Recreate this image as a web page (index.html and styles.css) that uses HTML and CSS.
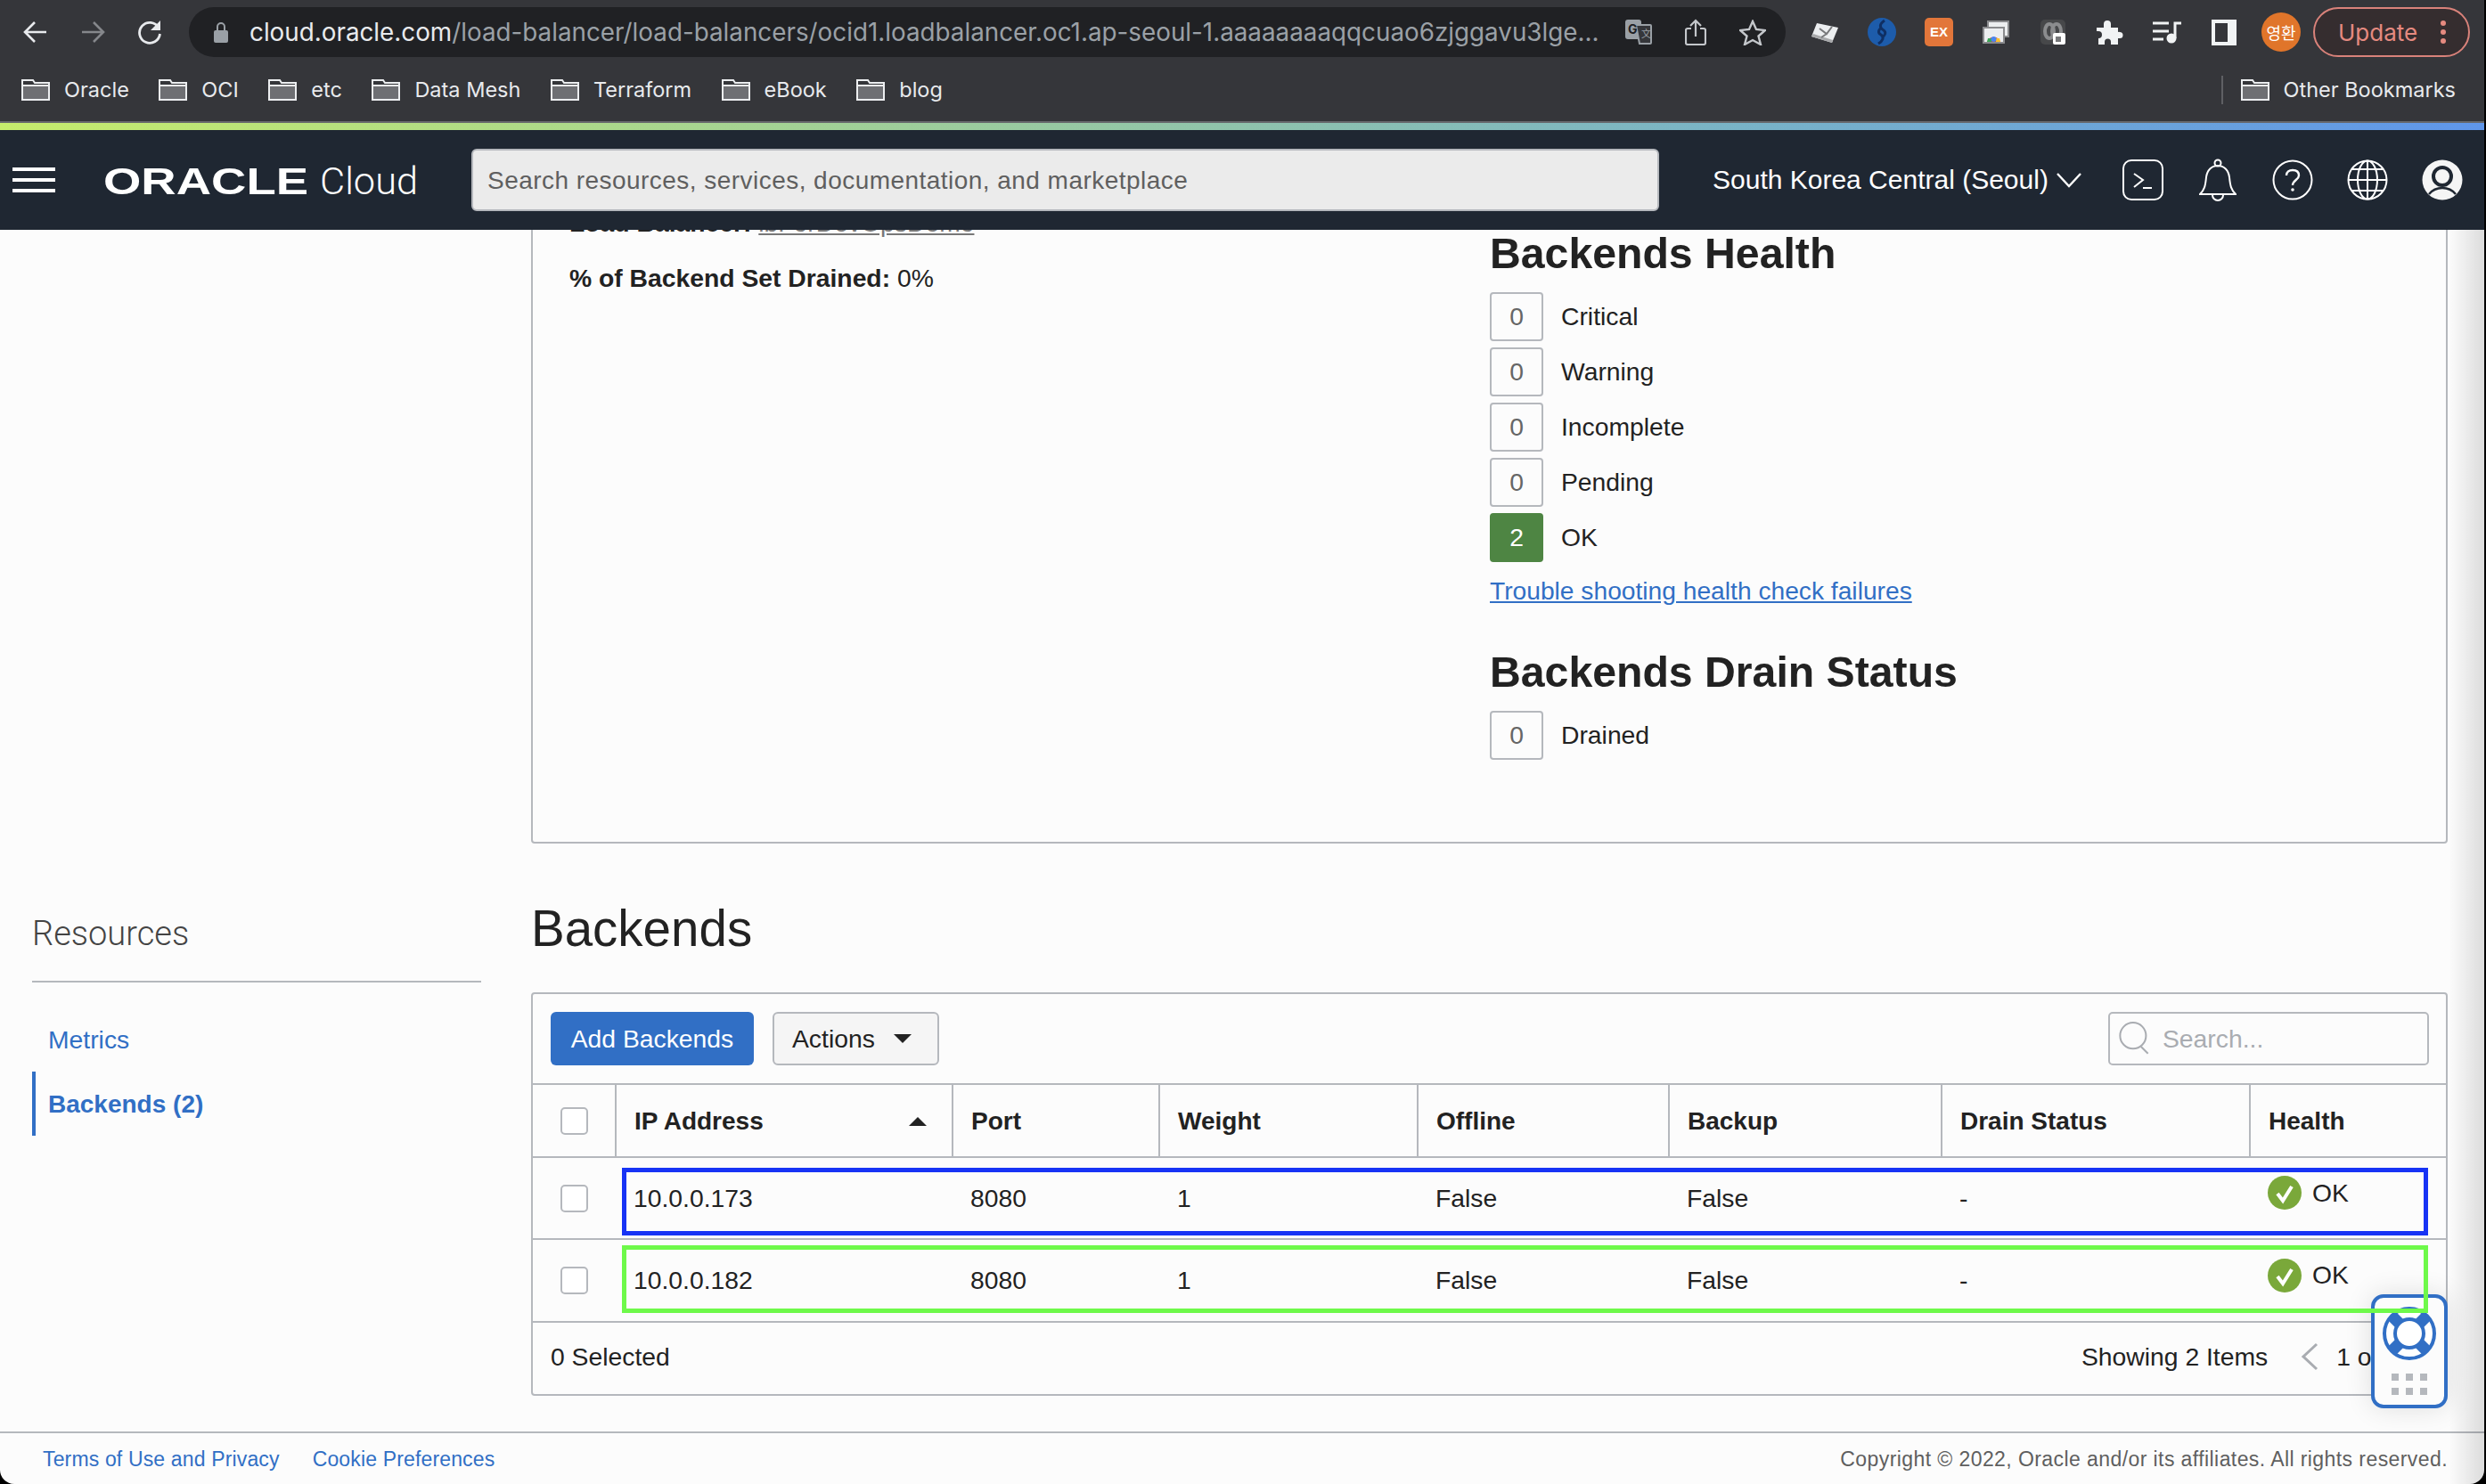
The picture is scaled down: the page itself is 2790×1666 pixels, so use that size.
FILE: index.html
```html
<!DOCTYPE html>
<html lang="en">
<head>
    <meta charset="UTF-8">
    <title>Load Balancer | Oracle Cloud Infrastructure</title>
    <link rel="stylesheet" href="styles.css">
</head>
<body>
<svg class="defs" width="0" height="0">
    <symbol id="folder" viewBox="0 0 32 24">
        <path d="M1 1h12l2 3h16v19H1z" fill="#35363a" stroke="#eceef0" stroke-width="2"/>
        <path d="M2 8h28v14H2z" fill="#6e6f73"/>
        <path d="M1 7h30" stroke="#eceef0" stroke-width="2"/>
    </symbol>
    <symbol id="check" viewBox="0 0 38 38">
        <circle cx="19" cy="19" r="19" fill="#7aa83a"/>
        <path d="M11 20l6 8 10-16" fill="none" stroke="#fff" stroke-width="4"/>
    </symbol>
</svg>
<div class="window">
    <div class="toolbar">
        <div class="nav-btn">
            <svg width="28" height="26" viewBox="0 0 28 26"><path d="M26 13H3M13 2L2 13l11 11" fill="none" stroke="#e8eaed" stroke-width="2.6"/></svg>
        </div>
        <div class="nav-btn">
            <svg width="28" height="26" viewBox="0 0 28 26"><path d="M2 13h23M15 2l11 11-11 11" fill="none" stroke="#85878b" stroke-width="2.6"/></svg>
        </div>
        <div class="nav-btn">
            <svg width="28" height="28" viewBox="0 0 28 28"><path d="M24 9a11.500 11.500 0 1 0 1.500 7" fill="none" stroke="#e8eaed" stroke-width="2.8"/><path d="M26 1v11H15z" fill="#e8eaed"/></svg>
        </div>
        <div class="omnibox">
            <svg class="lock" width="16" height="24" viewBox="0 0 16 24"><path d="M4 11V6a4 4 0 0 1 8 0v5" fill="none" stroke="#9aa0a6" stroke-width="2"/><rect y="10" width="16" height="14" rx="2" fill="#9aa0a6"/></svg>
            <div class="url"><span class="url-host">cloud.oracle.com</span>/load-balancer/load-balancers/ocid1.loadbalancer.oc1.ap-seoul-1.aaaaaaaaqqcuao6zjggavu3lge...</div>
            <div class="omni-icon">
                <svg width="30" height="28" viewBox="0 0 30 28"><rect width="18" height="22" rx="3" fill="#9aa0a6"/><path d="M12 6h16a1 1 0 0 1 1 1v19a1 1 0 0 1-1 1H16z" fill="#35363a" stroke="#9aa0a6" stroke-width="2"/><text x="3" y="16" class="omni-g">G</text><text x="18" y="20" class="omni-x">文</text></svg>
            </div>
            <div class="omni-icon">
                <svg width="24" height="30" viewBox="0 0 24 30"><path d="M7 11H3a2 2 0 0 0-2 2v14a2 2 0 0 0 2 2h18a2 2 0 0 0 2-2V13a2 2 0 0 0-2-2h-4M12 20V2M6 8l6-6 6 6" fill="none" stroke="#c4c7cb" stroke-width="2.2"/></svg>
            </div>
            <div class="omni-icon">
                <svg width="30" height="29" viewBox="0 0 30 29"><path d="M15 2l4 9 10 1-7.500 6.500L24 28l-9-5-9 5 2.500-9.500L1 12l10-1z" fill="none" stroke="#c4c7cb" stroke-width="2.4"/></svg>
            </div>
        </div>
        <div class="extensions">
            <div class="ext">
                <svg width="32" height="26" viewBox="0 0 32 26"><path d="M7 3l24 5-7 17L1 18z" fill="#eceef0"/><path d="M1 18l23 7 1-3L3 15z" fill="#a8a9ab"/><path d="M10 9l8 6 6-8M18 15l-6 4" stroke="#77787a" stroke-width="2" fill="none"/></svg>
            </div>
            <div class="ext">
                <svg width="32" height="32" viewBox="0 0 32 32"><circle cx="16" cy="16" r="16" fill="#1d5cab"/><path d="M19 3c-6 4-6 8-1 11 3 2 2 6-2 8M12 29c5-3 7-7 3-10-4-2-3-6 1-8" fill="none" stroke="#0f2f63" stroke-width="3"/></svg>
            </div>
            <div class="ext">
                <div class="ext-ex">EX</div>
            </div>
            <div class="ext">
                <svg width="30" height="26" viewBox="0 0 30 26"><rect x="6" y="1" width="23" height="17" fill="#eceef0" stroke="#8a8b8e" stroke-width="2"/><rect x="1" y="8" width="23" height="17" fill="#eceef0" stroke="#8a8b8e" stroke-width="2"/><path d="M5 24a8 8 0 0 1 15 0z" fill="#d9453a"/><path d="M5 24h5v-4H6z" fill="#3aa757"/><path d="M15 24h5l-1-4h-4z" fill="#fbc02d"/><circle cx="12.500" cy="21" r="3" fill="#4a85f0"/></svg>
            </div>
            <div class="ext">
                <svg width="28" height="28" viewBox="0 0 28 28"><rect width="28" height="28" rx="5" fill="#47484a"/><ellipse cx="10" cy="13" rx="5" ry="8" fill="none" stroke="#8b8c8e" stroke-width="4"/><ellipse cx="18" cy="13" rx="5" ry="8" fill="none" stroke="#8b8c8e" stroke-width="4"/><rect x="14" y="15" width="14" height="13" rx="2" fill="#fff"/><path d="M17 19h6v6h-6z" fill="#77787a"/></svg>
            </div>
            <div class="ext">
                <svg width="30" height="28" viewBox="0 0 30 28"><path d="M0 9h8V5a4 4 0 0 1 8 0v4h8v5a4 4 0 0 1 2 0 3.500 3.500 0 0 1 0 7h-2v7h-8v-3a3.500 3.500 0 0 0-7 0v3H2v-7a4 4 0 0 0 0-8h-2z" fill="#f1f3f4"/></svg>
            </div>
            <div class="ext">
                <svg width="32" height="26" viewBox="0 0 32 26"><path d="M0 3h18M0 12h18M0 21h12" stroke="#f1f3f4" stroke-width="3"/><path d="M25 20V3h7" fill="none" stroke="#f1f3f4" stroke-width="3"/><circle cx="21" cy="20" r="5.500" fill="#f1f3f4"/></svg>
            </div>
            <div class="ext">
                <div class="ext-panel"></div>
            </div>
            <div class="ext">
                <div class="profile">영환</div>
            </div>
        </div>
        <div class="update">
            <span>Update</span>
            <svg width="6" height="28" viewBox="0 0 6 28"><circle cx="3" cy="4" r="3" fill="#e58a80"/><circle cx="3" cy="14" r="3" fill="#e58a80"/><circle cx="3" cy="24" r="3" fill="#e58a80"/></svg>
        </div>
    </div>

    <div class="bookmarks">
        <div class="bookmark"><svg class="folder"><use href="#folder"/></svg>Oracle</div>
        <div class="bookmark"><svg class="folder"><use href="#folder"/></svg>OCI</div>
        <div class="bookmark"><svg class="folder"><use href="#folder"/></svg>etc</div>
        <div class="bookmark"><svg class="folder"><use href="#folder"/></svg>Data Mesh</div>
        <div class="bookmark"><svg class="folder"><use href="#folder"/></svg>Terraform</div>
        <div class="bookmark"><svg class="folder"><use href="#folder"/></svg>eBook</div>
        <div class="bookmark"><svg class="folder"><use href="#folder"/></svg>blog</div>
        <div class="bookmark-other"><svg class="folder"><use href="#folder"/></svg>Other Bookmarks</div>
    </div>

    <div class="accent"></div>

    <header class="console-header">
        <div class="hamburger"><span></span><span></span><span></span></div>
        <svg class="logo" width="360" height="48" viewBox="0 0 360 48">
            <text x="0" y="40" textLength="230" lengthAdjust="spacingAndGlyphs" class="logo-oracle">ORACLE</text>
            <text x="243" y="40" textLength="110" lengthAdjust="spacingAndGlyphs" class="logo-cloud">Cloud</text>
        </svg>
        <div class="console-search">Search resources, services, documentation, and marketplace</div>
        <div class="region">South Korea Central (Seoul)
            <svg width="28" height="18" viewBox="0 0 28 18"><path d="M1 2l13 14L27 2" fill="none" stroke="#fff" stroke-width="2.400"/></svg>
        </div>
        <div class="header-icons">
            <div class="header-icon">
                <svg width="46" height="46" viewBox="0 0 46 46"><rect x="1" y="1" width="44" height="44" rx="9" fill="none" stroke="#fff" stroke-width="2"/><path d="M13 16l10 7-10 8M23 32h10" fill="none" stroke="#fff" stroke-width="2"/></svg>
            </div>
            <div class="header-icon">
                <svg width="42" height="48" viewBox="0 0 42 48"><path d="M1 40c5-5 6-9 7-19 1-8 6-13 13-13s12 5 13 13c1 10 2 14 7 19z" fill="none" stroke="#fff" stroke-width="2"/><circle cx="21" cy="5" r="3.500" fill="none" stroke="#fff" stroke-width="2"/><path d="M15 41a6 6 0 0 0 12 0" fill="none" stroke="#fff" stroke-width="2"/></svg>
            </div>
            <div class="header-icon">
                <svg width="46" height="46" viewBox="0 0 46 46"><circle cx="23" cy="23" r="21.500" fill="none" stroke="#fff" stroke-width="2"/><path d="M16 18c0-4 3-6 7-6s7 2 7 6c0 5-7 5-7 11" fill="none" stroke="#fff" stroke-width="2.400"/><circle cx="23" cy="34" r="1.800" fill="#fff"/></svg>
            </div>
            <div class="header-icon">
                <svg width="46" height="46" viewBox="0 0 46 46"><g fill="none" stroke="#fff" stroke-width="2"><circle cx="23" cy="23" r="21.500"/><ellipse cx="23" cy="23" rx="11" ry="21.500"/><path d="M23 1.500v43M1.500 23h43M5 11h36M5 35h36"/></g></svg>
            </div>
            <div class="header-icon">
                <svg width="46" height="46" viewBox="0 0 46 46"><circle cx="23" cy="23" r="22.500" fill="#f5f5f5"/><circle cx="23" cy="19" r="10" fill="#f5f5f5" stroke="#1f2732" stroke-width="4"/><path d="M8 39c4-5 9-7 15-7s11 2 15 7" fill="none" stroke="#1f2732" stroke-width="2.500"/></svg>
            </div>
        </div>
    </header>

    <div class="page-body">
        <aside class="sidebar">
            <h3 class="sidebar-title">Resources</h3>
            <ul class="sidebar-menu">
                <li><a>Metrics</a></li>
                <li class="selected"><a>Backends (2)</a></li>
            </ul>
        </aside>

        <main class="main">
            <section class="details-card">
                <div class="details-left">
                    <p><strong>Load Balancer:</strong> <a class="lb-link">lbForDevOpsDemo</a></p>
                    <p><strong>% of Backend Set Drained:</strong> 0%</p>
                </div>
                <div class="details-right">
                    <h2>Backends Health</h2>
                    <div class="status-row"><span class="count">0</span>Critical</div>
                    <div class="status-row"><span class="count">0</span>Warning</div>
                    <div class="status-row"><span class="count">0</span>Incomplete</div>
                    <div class="status-row"><span class="count">0</span>Pending</div>
                    <div class="status-row"><span class="count count-ok">2</span>OK</div>
                    <a class="trouble-link">Trouble shooting health check failures</a>
                    <h2 class="drain-title">Backends Drain Status</h2>
                    <div class="status-row"><span class="count">0</span>Drained</div>
                </div>
            </section>

            <h1 class="section-title">Backends</h1>

            <section class="table-card">
                <div class="table-toolbar">
                    <button class="btn-primary">Add Backends</button>
                    <button class="btn-actions">Actions <span class="caret-down"></span></button>
                    <div class="table-search">
                        <svg width="34" height="38" viewBox="0 0 30 34"><circle cx="14" cy="14" r="13" fill="none" stroke="#a9acb1" stroke-width="1.800"/><path d="M22 25l7 7" stroke="#a9acb1" stroke-width="1.800"/></svg>
                        Search...
                    </div>
                </div>
                <table class="backends">
                    <colgroup>
                        <col class="col-check"><col class="col-ip"><col class="col-port"><col class="col-weight">
                        <col class="col-offline"><col class="col-backup"><col class="col-drain"><col class="col-health">
                    </colgroup>
                    <thead>
                        <tr>
                            <th class="check-cell"><span class="checkbox"></span></th>
                            <th><div class="th-sort">IP Address <span class="caret-up"></span></div></th>
                            <th>Port</th>
                            <th>Weight</th>
                            <th>Offline</th>
                            <th>Backup</th>
                            <th>Drain Status</th>
                            <th>Health</th>
                        </tr>
                    </thead>
                    <tbody>
                        <tr>
                            <td class="check-cell"><span class="checkbox"></span></td>
                            <td>10.0.0.173</td>
                            <td>8080</td>
                            <td>1</td>
                            <td>False</td>
                            <td>False</td>
                            <td>-</td>
                            <td class="health-cell"><div class="health"><svg class="health-icon"><use href="#check"/></svg>OK</div></td>
                        </tr>
                        <tr>
                            <td class="check-cell"><span class="checkbox"></span></td>
                            <td>10.0.0.182</td>
                            <td>8080</td>
                            <td>1</td>
                            <td>False</td>
                            <td>False</td>
                            <td>-</td>
                            <td class="health-cell"><div class="health"><svg class="health-icon"><use href="#check"/></svg>OK</div></td>
                        </tr>
                    </tbody>
                </table>
                <div class="table-footer">
                    <span>0 Selected</span>
                    <div class="pager">
                        <span class="pager-count">Showing 2 Items</span>
                        <svg width="20" height="32" viewBox="0 0 20 32"><path d="M18 2L3 16l15 14" fill="none" stroke="#a9acb1" stroke-width="3"/></svg>
                        <span>1 of 1</span>
                    </div>
                </div>
                <div class="mark mark-blue"></div>
                <div class="mark mark-green"></div>
            </section>
        </main>
    </div>

    <footer class="console-footer">
        <a>Terms of Use and Privacy</a>
        <a>Cookie Preferences</a>
        <span class="copyright">Copyright © 2022, Oracle and/or its affiliates. All rights reserved.</span>
    </footer>

    <div class="help-widget">
        <svg width="62" height="62" viewBox="0 0 62 62">
            <circle cx="31" cy="31" r="28" fill="#fff" stroke="#316fc5" stroke-width="4"/>
            <path d="M11 11l11 11M51 11L40 22M11 51l11-11M51 51L40 40" stroke="#316fc5" stroke-width="13"/>
            <circle cx="31" cy="31" r="16" fill="#fff" stroke="#316fc5" stroke-width="4"/>
        </svg>
        <div class="help-dots">
            <span></span><span></span><span></span><span></span><span></span><span></span>
        </div>
    </div>
    <div class="edge-shade"></div>
</div>
</body>
</html>
```

FILE: styles.css
```css
html, body {
    margin: 0;
    height: 100%;
    background-color: #000;
    overflow: hidden;
}

body {
    font-family: "Liberation Sans", Arial, sans-serif;
    font-size: 28.3px;
    color: #222;
}

.defs {
    position: absolute;
}

.window {
    position: relative;
    width: 2788px;
    height: 1666px;
    background-color: #fcfcfc;
    border-radius: 0 0 16px 16px;
    overflow: hidden;
}

/* browser toolbar */
.toolbar {
    display: flex;
    align-items: center;
    height: 72px;
    padding-left: 8px;
    background-color: #35363a;
}

.nav-btn {
    display: flex;
    justify-content: center;
    align-items: center;
    width: 64px;
}

.omnibox {
    display: flex;
    align-items: center;
    width: 1792px;
    height: 56px;
    margin-left: 12px;
    padding: 0 5px 0 28px;
    box-sizing: border-box;
    background-color: #202124;
    border-radius: 28px;
    font-family: Inter, sans-serif;
    font-size: 27.8px;
    color: #9aa0a6;
}

.lock {
    flex: none;
    margin-right: 24px;
}

.url {
    flex: 1;
    white-space: nowrap;
    overflow: hidden;
}

.url-host {
    color: #e8eaed;
}

.omni-icon {
    display: flex;
    justify-content: center;
    flex: none;
    width: 64px;
}

.omni-g {
    font-size: 14px;
    font-weight: 700;
    fill: #202124;
}

.omni-x {
    font-family: "Noto Sans CJK SC", sans-serif;
    font-size: 11px;
    fill: #9aa0a6;
}

.extensions {
    display: flex;
    margin-left: 12px;
}

.ext {
    display: flex;
    justify-content: center;
    align-items: center;
    width: 64px;
}

.ext-ex {
    width: 32px;
    height: 32px;
    line-height: 32px;
    text-align: center;
    background-color: #e2763a;
    border-radius: 5px;
    font-size: 15px;
    font-weight: 700;
    color: #fff;
}

.ext-panel {
    width: 14px;
    height: 21px;
    border: 4px solid #f1f3f4;
    border-right-width: 10px;
}

.profile {
    width: 44px;
    height: 44px;
    line-height: 44px;
    text-align: center;
    background-color: #e0752a;
    border-radius: 50%;
    font-family: "Noto Sans CJK KR", sans-serif;
    font-size: 18px;
    color: #fff;
}

.update {
    display: flex;
    align-items: center;
    justify-content: space-between;
    width: 176px;
    height: 56px;
    margin-left: 4px;
    padding: 0 25px 0 26px;
    box-sizing: border-box;
    background-color: #352d2f;
    border: 2px solid #d9827a;
    border-radius: 28px;
    font-family: Inter, sans-serif;
    font-size: 26px;
    color: #e58a80;
}

/* bookmarks bar */
.bookmarks {
    display: flex;
    align-items: center;
    gap: 33.5px;
    height: 64px;
    padding: 0 0 7px 24px;
    box-sizing: border-box;
    background-color: #35363a;
    font-family: Inter, sans-serif;
    font-size: 23.5px;
    color: #e8eaed;
}

.bookmark, .bookmark-other {
    display: flex;
    align-items: center;
    gap: 16px;
}

.bookmark-other {
    margin-left: auto;
    padding: 0 32px 0 20px;
    border-left: 2px solid #5f6064;
    height: 32px;
}

.folder {
    width: 32px;
    height: 24px;
}

.accent {
    height: 8px;
    border-top: 2px solid #66676b;
    background: linear-gradient(90deg, #c6ec6c, #9acb9f 40%, #79b3c7 70%, #5f96ea);
}

/* console header */
.console-header {
    display: flex;
    align-items: center;
    height: 112px;
    background-color: #1f2732;
    color: #fff;
}

.hamburger {
    display: flex;
    flex-direction: column;
    justify-content: space-between;
    width: 48px;
    height: 28px;
    margin-left: 14px;
}

.hamburger span {
    height: 4px;
    background-color: #fff;
}

.logo {
    flex: none;
    margin-left: 54px;
    overflow: visible;
}

.logo-oracle {
    font-size: 43px;
    font-weight: 700;
    fill: #fff;
}

.logo-cloud {
    font-family: Roboto, sans-serif;
    font-size: 43px;
    font-weight: 300;
    fill: #fff;
}

.console-search {
    width: 1333px;
    height: 70px;
    margin-left: 53px;
    padding-left: 16px;
    box-sizing: border-box;
    line-height: 68px;
    background-color: #ebebeb;
    border: 2px solid #b5b8bd;
    border-radius: 6px;
    font-size: 28px;
    letter-spacing: 0.46px;
    color: #5f5f5f;
}

.region {
    display: flex;
    align-items: center;
    gap: 9px;
    margin-left: 60px;
    font-size: 30px;
    white-space: nowrap;
}

.header-icons {
    display: flex;
    margin-left: 27px;
}

.header-icon {
    display: flex;
    justify-content: center;
    align-items: center;
    width: 84px;
}

/* page */
.page-body {
    display: flex;
    height: 1349px;
    overflow: hidden;
}

.sidebar {
    flex: none;
    width: 504px;
    margin: 0 56px 0 36px;
    padding-top: 768px;
}

.sidebar-title {
    margin: 0;
    padding-bottom: 31px;
    border-bottom: 2px solid #b5b8bd;
    font-family: Roboto, sans-serif;
    font-size: 38px;
    font-weight: 300;
    line-height: 44px;
    color: #444;
}

.sidebar-menu {
    margin: 28px 0 0;
    padding: 0;
    list-style: none;
    color: #316fc5;
}

.sidebar-menu li {
    height: 72px;
    line-height: 73px;
    padding-left: 18px;
}

.sidebar-menu .selected {
    padding-left: 14px;
    border-left: 4px solid #316fc5;
    font-weight: 700;
    font-size: 28px;
}

.main {
    flex: none;
    width: 2151px;
}

.details-card {
    display: grid;
    grid-template-columns: 1033px 1fr;
    height: 789px;
    margin-top: -100px;
    padding-left: 41px;
    box-sizing: border-box;
    background-color: #fcfcfc;
    border: 2px solid #b5b8bd;
    border-radius: 4px;
}

.details-left {
    padding-top: 73px;
}

.details-left p {
    margin: 0 0 28px;
    line-height: 34px;
}

.lb-link {
    color: #777;
    text-decoration: underline;
}

.details-right {
    padding-top: 96px;
}

.details-right h2 {
    margin: 0 0 16px;
    font-size: 48.2px;
    line-height: 56px;
}

.details-right .drain-title {
    margin: 46px 0 16px;
}

.status-row {
    display: flex;
    align-items: center;
    height: 55px;
    margin-bottom: 7px;
}

.count {
    width: 60px;
    height: 55px;
    margin-right: 20px;
    box-sizing: border-box;
    line-height: 51px;
    text-align: center;
    border: 2px solid #b5b8bd;
    border-radius: 4px;
    color: #666;
}

.count-ok {
    background-color: #4e8543;
    border-color: #4e8543;
    color: #fff;
}

.trouble-link {
    display: block;
    margin-top: 15px;
    line-height: 34px;
    font-size: 28.2px;
    color: #316fc5;
    text-decoration: underline;
}

.section-title {
    margin: 64px 0 39px;
    font-size: 56.5px;
    font-weight: 400;
    line-height: 64px;
}

.table-card {
    position: relative;
    height: 453px;
    box-sizing: border-box;
    border: 2px solid #b5b8bd;
    border-radius: 4px;
}

.table-toolbar {
    display: flex;
    align-items: center;
    gap: 21px;
    height: 100px;
    padding: 0 19px 0 20px;
}

.btn-primary, .btn-actions {
    height: 60px;
    padding: 0 20px;
    font-family: inherit;
    font-size: 28.3px;
    border-radius: 6px;
}

.btn-primary {
    width: 228px;
    background-color: #316fc5;
    border: none;
    color: #fff;
}

.btn-actions {
    display: flex;
    align-items: center;
    justify-content: space-between;
    width: 187px;
    background-color: #f5f5f5;
    border: 2px solid #b5b8bd;
    color: #222;
}

.caret-down {
    width: 0;
    height: 0;
    margin-right: 9px;
    border-left: 10px solid transparent;
    border-right: 10px solid transparent;
    border-top: 10px solid #222;
}

.caret-up {
    width: 0;
    height: 0;
    border-left: 10px solid transparent;
    border-right: 10px solid transparent;
    border-bottom: 10px solid #222;
}

.table-search {
    display: flex;
    align-items: center;
    gap: 15px;
    width: 360px;
    height: 60px;
    margin-left: auto;
    padding-left: 10px;
    box-sizing: border-box;
    border: 2px solid #b5b8bd;
    border-radius: 5px;
    color: #a9acb1;
}

.backends {
    width: 2147px;
    table-layout: fixed;
    border-collapse: collapse;
}

.col-check { width: 93px; }
.col-ip { width: 378px; }
.col-port { width: 232px; }
.col-weight { width: 290px; }
.col-offline { width: 282px; }
.col-backup { width: 306px; }
.col-drain { width: 346px; }
.col-health { width: 220px; }

.backends th, .backends td {
    padding: 0 0 0 20px;
    box-sizing: border-box;
    text-align: left;
    border-top: 2px solid #b5b8bd;
}

.backends th {
    height: 82px;
    padding-top: 2px;
    border-left: 2px solid #b5b8bd;
    font-size: 28px;
}

.backends td {
    height: 92px;
}

.backends .check-cell {
    padding: 0 0 0 31px;
    border-left: none;
}

.th-sort {
    display: flex;
    align-items: center;
    justify-content: space-between;
    padding-right: 28px;
}

.checkbox {
    display: block;
    width: 31px;
    height: 31px;
    box-sizing: border-box;
    background-color: #fff;
    border: 2px solid #b5b8bd;
    border-radius: 5px;
}

.backends .health-cell {
    padding-bottom: 12px;
}

.health {
    display: flex;
    align-items: center;
    gap: 12px;
}

.health-icon {
    width: 38px;
    height: 38px;
}

.table-footer {
    display: flex;
    align-items: center;
    justify-content: space-between;
    height: 80px;
    padding: 0 0 2px 20px;
    box-sizing: border-box;
    border-top: 2px solid #b5b8bd;
}

.pager {
    display: flex;
    align-items: center;
    gap: 20px;
    white-space: nowrap;
    margin-right: 52px;
}

.pager-count {
    margin-right: 17px;
}

/* hand drawn boxes on top of the rows */
.mark {
    position: absolute;
    left: 100px;
    z-index: 3;
    width: 2027px;
    height: 76px;
    box-sizing: border-box;
    border-width: 5px;
    border-style: solid;
}

.mark-blue {
    top: 195px;
    border-color: #1733f5;
}

.mark-green {
    top: 282px;
    border-color: #6ef94a;
}

.console-footer {
    display: flex;
    align-items: center;
    gap: 37px;
    height: 59px;
    padding: 0 41px 0 48px;
    border-top: 2px solid #b5b8bd;
    font-size: 23px;
    color: #316fc5;
    letter-spacing: 0.15px;
}

.copyright {
    margin-left: auto;
    color: #5f5f5f;
    letter-spacing: 0.42px;
}

.help-widget {
    position: absolute;
    top: 1453px;
    left: 2661px;
    z-index: 2;
    display: flex;
    flex-direction: column;
    align-items: center;
    width: 86px;
    height: 128px;
    padding-top: 9px;
    box-sizing: border-box;
    background-color: #fcfcfc;
    border: 4px solid #316fc5;
    border-radius: 14px;
    box-shadow: 0 0 30px rgba(0, 0, 0, 0.12);
}

.help-dots {
    display: grid;
    grid-template-columns: repeat(3, 8px);
    gap: 8px 8px;
    margin-top: 14px;
}

.help-dots span {
    height: 8px;
    background-color: #b5b8bd;
}

.edge-shade {
    position: absolute;
    top: 258px;
    right: 0;
    bottom: 0;
    width: 40px;
    background: linear-gradient(90deg, rgba(0, 0, 0, 0), rgba(0, 0, 0, 0.13));
}
```
